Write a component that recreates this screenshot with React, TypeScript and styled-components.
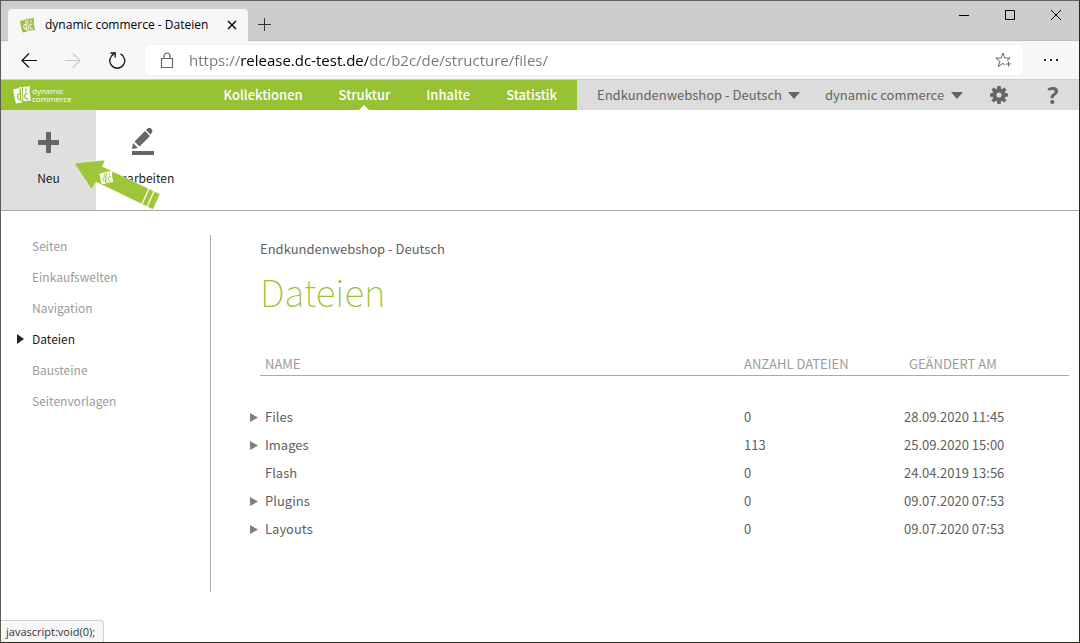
import React from 'react';
import styled, { createGlobalStyle, css } from 'styled-components';

const green = '#97c234';
const grey = '#646464';
const uiFont = `"Open Sans", "Noto Sans", sans-serif`;
const siteFont = `"Noto Sans CJK SC", "Noto Sans", sans-serif`;

const GlobalStyle = createGlobalStyle`
  * { box-sizing: border-box; }
  body { margin: 0; background: #fff; font-family: ${siteFont}; }
  button, input, select { font: inherit; color: inherit; border: 0; background: none; padding: 0; margin: 0; }
  a { color: inherit; text-decoration: none; }
  svg { display: block; flex: none; }
`;

const Window = styled.div`
  position: relative;
  display: flex;
  flex-direction: column;
  min-height: 100vh;
  border: 1px solid #26281f;
  border-top-color: #5f5f5f;
  border-left-color: #5c5f50;
`;

const TabStrip = styled.div`
  display: flex;
  height: 40px;
  background: #cdcdcd;
  border-bottom: 1px solid #bebebe;
  font-family: ${uiFont};
`;

const Tab = styled.div`
  display: flex;
  align-items: center;
  gap: 10px;
  width: 240px;
  height: 32px;
  margin: 8px 0 0 7px;
  padding: 0 10px 0 12px;
  border-radius: 4px 4px 0 0;
  background: #f7f7f7;
  font-size: 12px;
  line-height: 16px;
  white-space: nowrap;
`;

const TabTitle = styled.span`
  flex: 1;
`;

const IconButton = styled.button<{ $w?: number; $h?: number }>`
  display: flex;
  align-items: center;
  justify-content: center;
  width: ${p => p.$w ?? 16}px;
  height: ${p => p.$h ?? 16}px;
`;

const NewTab = styled(IconButton)`
  margin-top: 7px;
`;

const WindowButtons = styled.div`
  display: flex;
  margin-left: auto;
`;

const AddressRow = styled.div`
  display: flex;
  align-items: center;
  height: 39px;
  padding: 0 6px;
  background: #f7f7f7;
  border-bottom: 1px solid #cfcfcf;
`;

const AddressBar = styled.label`
  display: flex;
  align-items: center;
  flex: 1;
  height: 30px;
  margin: 0 6px;
  padding: 0 12px 0 15px;
  gap: 14px;
  border-radius: 4px;
  background: #fff;
  box-shadow: 0 0 2px #e2e2e2;
`;

const AddressInput = styled.input`
  flex: 1;
  min-width: 0;
  height: 22px;
  outline: 0;
  font-family: ${uiFont};
  font-size: 15px;
  background: linear-gradient(to right, #767676 52px, #000 52px, #000 179px, #767676 179px);
  background-clip: text;
  -webkit-text-fill-color: transparent;
`;

const SiteHeader = styled.header`
  display: flex;
  height: 30px;
  background: #dcdcdc;
  font-size: 13px;
  line-height: 30px;
  color: ${grey};
`;

const Brand = styled.div`
  display: flex;
  flex: 0 0 576px;
  justify-content: space-between;
  padding: 0 20px 0 12px;
  background: ${green};
  color: #fff;
`;

const Logo = styled.a`
  display: flex;
  align-items: center;
  gap: 1px;
`;

const LogoText = styled.span`
  display: flex;
  flex-direction: column;
  font-family: ${uiFont};
  font-size: 8px;
  line-height: 8px;
`;

const MainNav = styled.nav`
  display: flex;
  gap: 36px;
`;

const NavLink = styled.a<{ $active?: boolean }>`
  position: relative;
  font-weight: 500;
  ${p => p.$active && css`
    &::after {
      content: '';
      position: absolute;
      left: 50%;
      bottom: 0;
      margin-left: -5px;
      border: 5px solid transparent;
      border-top-width: 0;
      border-bottom-color: #fff;
    }
  `}
`;

const Picker = styled.label`
  display: flex;
  align-items: center;
  gap: 6px;
  margin-left: 20px;
  & + & { margin-left: 25px; }
`;

const PickerSelect = styled.select`
  appearance: none;
  height: 30px;
  line-height: 30px;
`;

const HeaderTools = styled.div`
  display: flex;
  align-items: center;
  margin-left: auto;
  padding-right: 18px;
  gap: 37px;
`;

const HelpButton = styled(IconButton)`
  font-family: ${uiFont};
  font-size: 23px;
  line-height: 28px;
  font-weight: 700;
`;

const Ribbon = styled.div`
  position: relative;
  display: flex;
  height: 101px;
  border-bottom: 1px solid #a9a9a9;
`;

const RibbonButton = styled.button<{ $active?: boolean }>`
  display: flex;
  flex-direction: column;
  align-items: center;
  width: 95px;
  padding-top: 16px;
  gap: 12px;
  font-size: 12px;
  line-height: 16px;
  color: #222;
  background: ${p => (p.$active ? '#dfdfdf' : 'none')};
  svg { fill: #666; }
`;

const Pointer = styled.svg`
  position: absolute;
  left: 67px;
  top: 45px;
`;

const Body = styled.div`
  display: flex;
  flex: 1;
  align-items: flex-start;
  padding: 24px 10px 50px 0;
`;

const SideNav = styled.nav`
  flex: 0 0 210px;
  height: 357px;
  padding-left: 16px;
  border-right: 1px solid #a9a9a9;
  font-size: 12px;
  line-height: 31px;
`;

const SideList = styled.ul`
  list-style: none;
  margin: -5px 0 0;
  padding: 0;
`;

const SideItem = styled.li<{ $active?: boolean }>`
  display: flex;
  align-items: center;
  color: ${p => (p.$active ? '#222' : '#9b9b9b')};
`;

const Marker = styled.span`
  width: 15px;
`;

const Main = styled.main`
  flex: 1;
  min-width: 0;
  padding: 4px 0 0 37px;
  color: #5f5f5f;
  font-size: 13px;
`;

const ShopName = styled.p`
  margin: 0 0 0 12px;
  line-height: 20px;
`;

const Title = styled.h1`
  margin: 7px 0 38px 12px;
  font-size: 37px;
  line-height: 50px;
  font-weight: 100;
  color: ${green};
`;

const FileTable = styled.table`
  width: 100%;
  border-spacing: 0;
  table-layout: fixed;
  line-height: 20px;
  tbody::before { content: ''; display: block; height: 27px; }
`;

const Head = styled.th<{ $w?: number; $indent?: number }>`
  width: ${p => (p.$w ? p.$w + 'px' : 'auto')};
  padding: 0 0 1px ${p => p.$indent ?? 5}px;
  border-bottom: 1px solid #a9a9a9;
  text-align: left;
  font-weight: 400;
  color: #9b9b9b;
`;

const ToggleHead = styled.td`
  width: 12px;
  padding: 0;
`;

const Cell = styled.td`
  height: 28px;
  padding: 0 0 0 5px;
`;

const ToggleCell = styled.td`
  padding: 0;
`;

const StatusBar = styled.div`
  position: absolute;
  left: 0;
  bottom: 0;
  height: 22px;
  padding: 0 8px 0 5px;
  border: 1px solid #d0d0d0;
  border-width: 1px 1px 0 0;
  border-radius: 0 4px 0 0;
  background: #f7f7f7;
  color: #333;
  font-family: ${uiFont};
  font-size: 11px;
  line-height: 21px;
`;

const LogoShapes = ({ fill, ink }: { fill: string; ink: string }) => (
  <>
    <path d="M0 3.500 6.500 2l.3-1L8.800.8 9.500 14 8.500 16.500 3 17.500 2 14z" fill={fill} />
    <path d="M9.800 1 17 .3l-.6 5.400L18 14.500l-7.500.8z" fill={fill} />
    <g fill="none" stroke={ink} strokeWidth="1.300">
      <path d="M7 2.500 8 15M7.300 8C3.500 6.500 3.500 14.500 7.800 13.500" />
      <path d="M15 7.500c-4.500-1.500-4.500 6.500.5 5.500M13 2.500v3" />
    </g>
  </>
);

const LogoMark = ({ fill, ink, size = 18 }: { fill: string; ink: string; size?: number }) => (
  <svg width={size} height={size} viewBox="0 0 18 18" aria-hidden="true">
    <LogoShapes fill={fill} ink={ink} />
  </svg>
);

const Triangle = ({ down, color, w, h }: { down?: boolean; color: string; w: number; h: number }) => (
  <svg width={w} height={h} viewBox="0 0 10 10" preserveAspectRatio="none" aria-hidden="true">
    <path d={down ? 'M0 0h10L5 10z' : 'M0 0v10L10 5z'} fill={color} />
  </svg>
);

const navItems = ['Kollektionen', 'Struktur', 'Inhalte', 'Statistik'];
const sideItems = ['Seiten', 'Einkaufswelten', 'Navigation', 'Dateien', 'Bausteine', 'Seitenvorlagen'];
const files = [
  { name: 'Files', count: 0, date: '28.09.2020 11:45', folder: true },
  { name: 'Images', count: 113, date: '25.09.2020 15:00', folder: true },
  { name: 'Flash', count: 0, date: '24.04.2019 13:56', folder: false },
  { name: 'Plugins', count: 0, date: '09.07.2020 07:53', folder: true },
  { name: 'Layouts', count: 0, date: '09.07.2020 07:53', folder: true },
];

export default function App() {
  return (
    <Window>
      <GlobalStyle />
      <TabStrip>
        <Tab>
          <LogoMark fill={green} ink="#f7f7f7" size={15} />
          <TabTitle>dynamic commerce - Dateien</TabTitle>
          <IconButton $w={12} aria-label="Tab schließen">
            <svg width="10" height="10" viewBox="0 0 10 10"><path d="m1 1 8 8M9 1 1 9" stroke="#111" strokeWidth="1.600" /></svg>
          </IconButton>
        </Tab>
        <NewTab $w={32} $h={32} aria-label="Neuer Tab">
          <svg width="13" height="13" viewBox="0 0 13 13"><path d="M6.500 0v13M0 6.500h13" stroke="#333" /></svg>
        </NewTab>
        <WindowButtons>
          <IconButton $w={46} $h={28} aria-label="Minimieren">
            <svg width="10" height="10" viewBox="0 0 10 10"><path d="M0 5.500h10" stroke="#000" /></svg>
          </IconButton>
          <IconButton $w={46} $h={28} aria-label="Maximieren">
            <svg width="10" height="10" viewBox="0 0 10 10"><path d="M.5.5h9v9h-9z" fill="none" stroke="#000" /></svg>
          </IconButton>
          <IconButton $w={46} $h={28} aria-label="Schließen">
            <svg width="10" height="10" viewBox="0 0 10 10"><path d="m0 0 10 10M10 0 0 10" stroke="#000" /></svg>
          </IconButton>
        </WindowButtons>
      </TabStrip>

      <AddressRow>
        <IconButton $w={44} $h={30} aria-label="Zurück">
          <svg width="16" height="15" viewBox="0 0 16 15" fill="none" stroke="#111" strokeWidth="1.200"><path d="M16 7.500H1M8 .5l-7 7 7 7" /></svg>
        </IconButton>
        <IconButton $w={44} $h={30} aria-label="Vorwärts" disabled>
          <svg width="16" height="15" viewBox="0 0 16 15" fill="none" stroke="#ccc" strokeWidth="1.200"><path d="M0 7.500h15M8 .5l7 7-7 7" /></svg>
        </IconButton>
        <IconButton $w={44} $h={30} aria-label="Aktualisieren">
          <svg width="17" height="17" viewBox="0 0 17 17" fill="none" stroke="#111" strokeWidth="1.300"><path d="M11.500 1.800A7.500 7.500 0 1 1 5 1.800M1.500 1h4.700v4.500" /></svg>
        </IconButton>
        <AddressBar>
          <svg width="15" height="17" viewBox="0 0 15 17" fill="none" stroke="#666" strokeWidth="1.200"><path d="M1.500 6.500h11v9h-11zM4 6.500V4a3 3 0 0 1 6 0v2.500" /></svg>
          <AddressInput aria-label="Adresse" defaultValue="https://release.dc-test.de/dc/b2c/de/structure/files/" />
          <IconButton aria-label="Zu Favoriten hinzufügen">
            <svg width="17" height="16" viewBox="0 0 17 16" fill="none" stroke="#666">
              <path d="M10 13 8 11.300 3.300 14.500 5 9.300.8 6h5.400L8 1l1.800 5h5.400l-3.500 2.800M13.500 9.500v5M11 12h5" />
            </svg>
          </IconButton>
        </AddressBar>
        <IconButton $w={44} $h={30} aria-label="Mehr">
          <svg width="14" height="2" viewBox="0 0 14 2"><path d="M0 0h2v2H0zM6 0h2v2H6zM12 0h2v2h-2z" fill="#222" /></svg>
        </IconButton>
      </AddressRow>

      <SiteHeader>
        <Brand>
          <Logo href="#">
            <LogoMark fill="#fff" ink={green} />
            <LogoText><span>dynamic</span><span>commerce</span></LogoText>
          </Logo>
          <MainNav>
            {navItems.map(n => <NavLink href="#" key={n} $active={n === 'Struktur'}>{n}</NavLink>)}
          </MainNav>
        </Brand>
        <Picker>
          <PickerSelect aria-label="Shop"><option>Endkundenwebshop - Deutsch</option></PickerSelect>
          <Triangle down color={grey} w={12} h={7} />
        </Picker>
        <Picker>
          <PickerSelect aria-label="Konto"><option>dynamic commerce</option></PickerSelect>
          <Triangle down color={grey} w={12} h={7} />
        </Picker>
        <HeaderTools>
          <IconButton $w={18} $h={18} aria-label="Einstellungen">
            <svg width="18" height="18" viewBox="-9 -9 18 18">
              <g fill={grey}>
                {[0, 45, 90, 135].map(a => <path key={a} transform={`rotate(${a})`} d="M-1.600-9h3.200l.6 4v10L1.600 9h-3.200l-.6-4V-5z" />)}
                <circle r="6.300" />
              </g>
              <circle r="2.600" fill="#dcdcdc" />
            </svg>
          </IconButton>
          <HelpButton $w={16} $h={30} aria-label="Hilfe">?</HelpButton>
        </HeaderTools>
      </SiteHeader>

      <Ribbon>
        <RibbonButton $active>
          <svg width="32" height="32" viewBox="0 0 32 32"><path d="M13 6h5v8h8v5h-8v8h-5v-8H5v-5h8z" /></svg>
          Neu
        </RibbonButton>
        <RibbonButton>
          <svg width="32" height="32" viewBox="0 0 32 32">
            <path d="M4 25h22v4H4zM4 23l1-6 5 5zM6.500 15.500 17 5l5 5-10.500 10.500zM18 4l2-1.800q2-1 3.500.8 1.700 1.700.5 3.500l-1.500 2z" />
          </svg>
          Bearbeiten
        </RibbonButton>
        <Pointer width="100" height="60" viewBox="68 155 100 60" aria-hidden="true">
          <path d="M74 163l31-3-2.500 6.500L160 194l-7 15.500L96 182l-4.500 7.500z" fill="#9dc63d" stroke="#fff" strokeOpacity=".5" />
          <path d="M149 188.500l-7.300 16M154.200 191l-7.300 16" stroke="#fff" strokeWidth="1.300" />
          <g transform="translate(99.500 171) scale(.76)">
            <LogoShapes fill="#fff" ink="#9dc63d" />
          </g>
        </Pointer>
      </Ribbon>

      <Body>
        <SideNav>
          <SideList>
            {sideItems.map(s => (
              <SideItem key={s} $active={s === 'Dateien'}>
                <Marker>{s === 'Dateien' && <Triangle color="#222" w={7} h={10} />}</Marker>
                <a href="#">{s}</a>
              </SideItem>
            ))}
          </SideList>
        </SideNav>
        <Main>
          <ShopName>Endkundenwebshop - Deutsch</ShopName>
          <Title>Dateien</Title>
          <FileTable>
            <thead>
              <tr>
                <ToggleHead />
                <Head>NAME</Head>
                <Head $w={160}>ANZAHL DATEIEN</Head>
                <Head $w={170} $indent={10}>GEÄNDERT AM</Head>
              </tr>
            </thead>
            <tbody>
              {files.map(f => (
                <tr key={f.name}>
                  <ToggleCell>
                    {f.folder && (
                      <IconButton $w={12} aria-label={f.name + ' aufklappen'}>
                        <Triangle color="#808080" w={8} h={9} />
                      </IconButton>
                    )}
                  </ToggleCell>
                  <Cell>{f.name}</Cell>
                  <Cell>{f.count}</Cell>
                  <Cell>{f.date}</Cell>
                </tr>
              ))}
            </tbody>
          </FileTable>
        </Main>
      </Body>
      <StatusBar>javascript:void(0);</StatusBar>
    </Window>
  );
}
